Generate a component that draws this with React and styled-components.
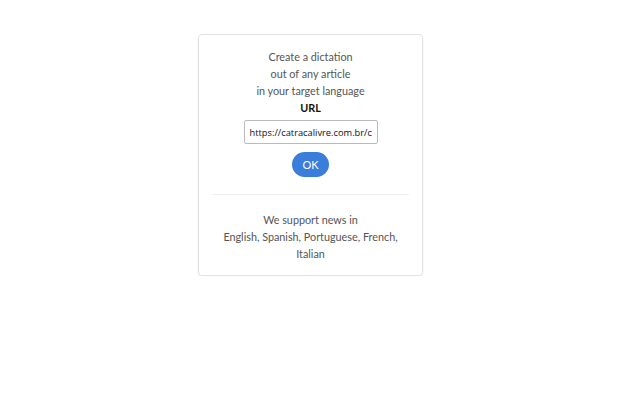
import styled, { createGlobalStyle } from "styled-components";

const Global = createGlobalStyle`
  body {
    margin: 0;
    background: #fff;
    font-family: Lato, "Open Sans", sans-serif;
  }
`

const Page = styled.div`
  padding: 34px 0 0 198px;
`

const Card = styled.div`
  box-sizing: border-box;
  width: 225px;
  border: 1px solid #e2e2e2;
  border-radius: 4px;
  box-shadow: 0 1px 2px rgba(0, 0, 0, 0.08);
  padding: 13px 13px 13px;
  display: flex;
  flex-direction: column;
  align-items: center;
  text-align: center;
`

const Line = styled.div`
  font-size: 10.8px;
  line-height: 17px;
  color: ${props => props.strong ? '#111' : '#555'};
  font-weight: ${props => props.strong ? 700 : 400};
`

const UrlInput = styled.input`
  box-sizing: border-box;
  width: 134px;
  height: 24px;
  margin-top: 4px;
  padding: 0 5px;
  border: 1px solid #bbb;
  border-radius: 2px;
  font-family: "Open Sans", sans-serif;
  font-size: 9.3px;
  color: #111;
  outline: none;
`

const OkButton = styled.button`
  margin-top: 8px;
  width: 37px;
  height: 25px;
  border: none;
  border-radius: 13px;
  background: #3a7ddb;
  color: #fff;
  font-family: Lato, sans-serif;
  font-size: 11px;
  padding: 0;
`

const Divider = styled.hr`
  align-self: stretch;
  border: none;
  border-top: 1px solid #eee;
  margin: 17px 0 16px;
`

function App(){
  return(
    <>
      <Global />
      <Page>
        <Card>
          <Line>Create a dictation</Line>
          <Line>out of any article</Line>
          <Line>in your target language</Line>
          <Line strong>URL</Line>
          <UrlInput defaultValue="https://catracalivre.com.br/cidadania/" />
          <OkButton>OK</OkButton>
          <Divider />
          <Line>We support news in</Line>
          <Line>English, Spanish, Portuguese, French,</Line>
          <Line>Italian</Line>
        </Card>
      </Page>
    </>
  )
}

export default App;
